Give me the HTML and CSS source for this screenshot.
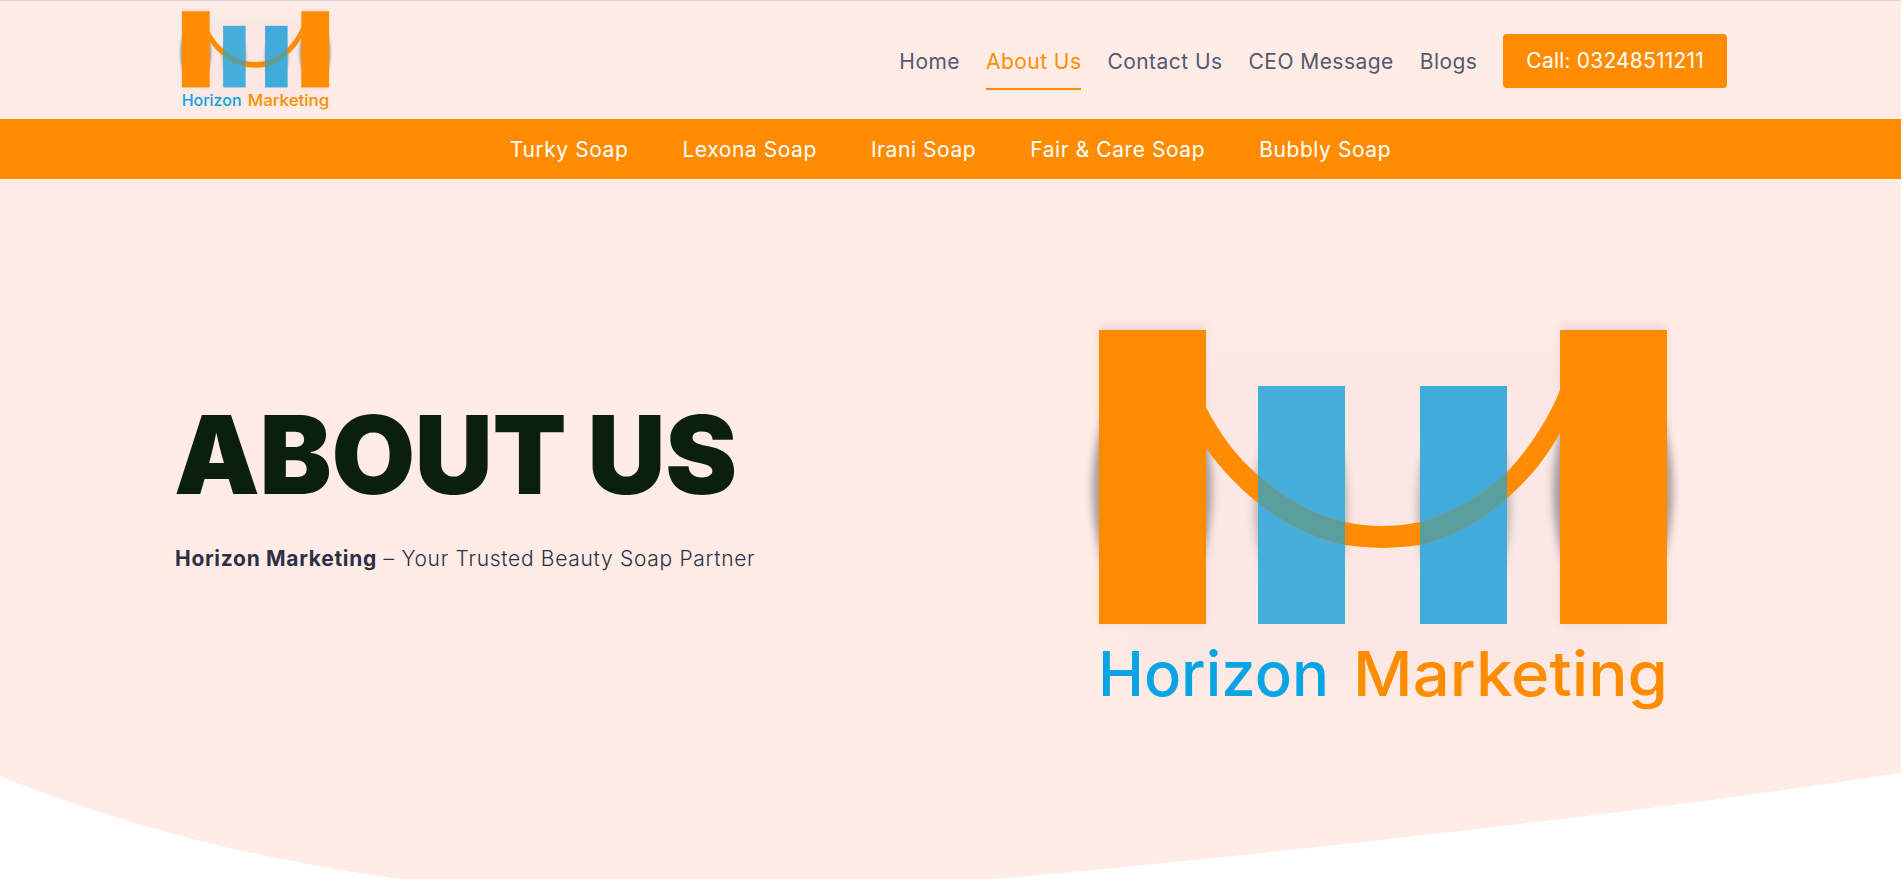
FILE: index.html
```html
<!DOCTYPE html>
<html lang="en">
<head>
  <meta charset="UTF-8">
  <meta name="viewport" content="width=device-width, initial-scale=1.0">
  <title>About Us - Horizon Marketing</title>
  <link rel="stylesheet" href="styles.css">
</head>
<body>
<header class="site-header">
  <a href="#" class="brand">
    <svg class="logo-small" viewBox="0 0 610 420" role="img" aria-label="Horizon Marketing">
      <defs>
        <filter id="halo" x="-20%" y="-20%" width="140%" height="140%">
          <feGaussianBlur stdDeviation="12"></feGaussianBlur>
        </filter>
        <filter id="soft" x="-30%" y="-30%" width="160%" height="160%">
          <feGaussianBlur stdDeviation="4"></feGaussianBlur>
        </filter>
        <clipPath id="blue-bars">
          <rect x="178" y="76" width="87" height="238"></rect>
          <rect x="340" y="76" width="87" height="238"></rect>
        </clipPath>
        <path id="arc" d="M126 97 C140 125 158 148 178 165 C205 189 235 206 265 212 Q302 220 340 212 C372 204 402 186 427 162 C448 140 468 110 480 80 L480 123 C465 150 448 170 427 188 C400 212 370 228 340 235 Q302 241 265 235 C235 229 205 214 178 193 C158 177 140 158 126 138 Z"></path>
        <symbol id="logo" viewBox="0 0 610 420">
          <!-- soft glow behind the bars -->
          <rect x="35" y="30" width="540" height="350" fill="#e8d8d4" opacity="0.15" filter="url(#halo)"></rect>
          <rect x="19" y="14" width="107" height="300" fill="#6b5a55" opacity="0.12" filter="url(#soft)"></rect>
          <rect x="480" y="14" width="107" height="300" fill="#6b5a55" opacity="0.12" filter="url(#soft)"></rect>
          <g filter="url(#soft)" opacity="0.5">
            <ellipse cx="72" cy="180" rx="60" ry="118" fill="#555"></ellipse>
            <ellipse cx="533" cy="180" rx="60" ry="118" fill="#555"></ellipse>
            <ellipse cx="221" cy="196" rx="47" ry="100" fill="#8a8583"></ellipse>
            <ellipse cx="384" cy="196" rx="47" ry="100" fill="#8a8583"></ellipse>
          </g>
          <rect x="178" y="76" width="87" height="238" fill="#45aedb"></rect>
          <rect x="340" y="76" width="87" height="238" fill="#41abdb"></rect>
          <use href="#arc" fill="#ff8c00"></use>
          <use href="#arc" fill="#5a9e9e" clip-path="url(#blue-bars)"></use>
          <rect x="19" y="20" width="107" height="294" fill="#ff8c00"></rect>
          <rect x="480" y="20" width="107" height="294" fill="#ff8c00"></rect>
          <text class="logo-text" x="18" y="386" textLength="231" lengthAdjust="spacingAndGlyphs" fill="#09a4e3">Horizon</text>
          <text class="logo-text" x="273" y="386" textLength="315" lengthAdjust="spacingAndGlyphs" fill="#ff8c00">Marketing</text>
        </symbol>
      </defs>
      <use href="#logo"></use>
    </svg>
  </a>
  <nav class="main-nav">
    <a href="#">Home</a>
    <a href="#" class="active">About Us</a>
    <a href="#">Contact Us</a>
    <a href="#">CEO Message</a>
    <a href="#">Blogs</a>
    <a href="#" class="call-btn">Call: 03248511211</a>
  </nav>
</header>

<nav class="category-bar">
  <a href="#">Turky Soap</a>
  <a href="#">Lexona Soap</a>
  <a href="#">Irani Soap</a>
  <a href="#">Fair &amp; Care Soap</a>
  <a href="#">Bubbly Soap</a>
</nav>

<section class="hero">
  <div class="hero-text">
    <h1>ABOUT US</h1>
    <p><strong>Horizon Marketing</strong> – Your Trusted Beauty Soap Partner</p>
  </div>
  <svg class="logo-large" viewBox="0 0 610 420" role="img" aria-label="Horizon Marketing">
    <use href="#logo"></use>
  </svg>
  <svg class="hero-curve" viewBox="0 0 1901 106" preserveAspectRatio="none" aria-hidden="true">
    <path d="M0 3 C130 56 270 88 400 106 L995 106 C1300 78 1600 45 1901 0 L1901 106 L0 106 Z" fill="#fff"></path>
  </svg>
</section>
</body>
</html>
```

FILE: styles.css
```css
html, body {
    height: 100%;
}

body {
    margin: 0 2px 0 0;
    font-family: Inter, "Noto Sans", sans-serif;
    background-color: #fff;
    overflow: hidden;
}

a {
    text-decoration: none;
}

.site-header {
    display: flex;
    justify-content: space-between;
    align-items: center;
    height: 118px;
    padding: 0 174px 0 177px;
    border-top: 1px solid #d8d4d8;
    background: #ffece7;
}

.brand {
    display: block;
    height: 109px;
}

.logo-small {
    display: block;
    width: 158px;
    height: 109px;
}

.main-nav {
    display: flex;
    align-items: center;
    gap: 26px;
    margin-top: 2px;
    font-size: 21px;
    letter-spacing: 0.45px;
}

.main-nav a {
    color: #55586e;
    padding: 17px 0 14px;
    border-bottom: 2px solid transparent;
}

.main-nav a.active {
    color: #ff8c00;
    border-bottom-color: #ff8c00;
}

.main-nav a.call-btn {
    color: #fff;
    background: #ff8c00;
    border-radius: 4px;
    border-bottom: none;
    padding: 0 23px;
    line-height: 54px;
    letter-spacing: 0.2px;
}

.category-bar {
    display: flex;
    justify-content: center;
    align-items: center;
    gap: 54px;
    height: 60px;
    background: #ff8c00;
    font-size: 21px;
    letter-spacing: 0.57px;
}

.category-bar a {
    color: #fff;
}

.hero {
    position: relative;
    display: flex;
    justify-content: space-between;
    height: 700px;
    padding: 131px 211px 0 174px;
    box-sizing: border-box;
    overflow: hidden;
    background: #ffece7;
}

.hero-text {
    padding-top: 80px;
}

.hero-text h1 {
    margin: 0 0 26px;
    font-size: 108px;
    font-weight: 900;
    line-height: 130px;
    letter-spacing: -0.3px;
    color: #0a1f0e;
}

.hero-text p {
    margin: 0 0 0 1px;
    font-size: 21px;
    font-weight: 300;
    letter-spacing: 0.7px;
    color: #2d3045;
}

.hero-text strong {
    font-weight: 700;
}

.logo-large {
    display: block;
    width: 610px;
    height: 420px;
}

.logo-text {
    font-family: Inter, sans-serif;
    font-size: 62px;
    font-weight: 500;
    letter-spacing: 0;
}

.hero-curve {
    position: absolute;
    left: 0;
    bottom: 0;
    width: 100%;
    height: 106px;
}
```
